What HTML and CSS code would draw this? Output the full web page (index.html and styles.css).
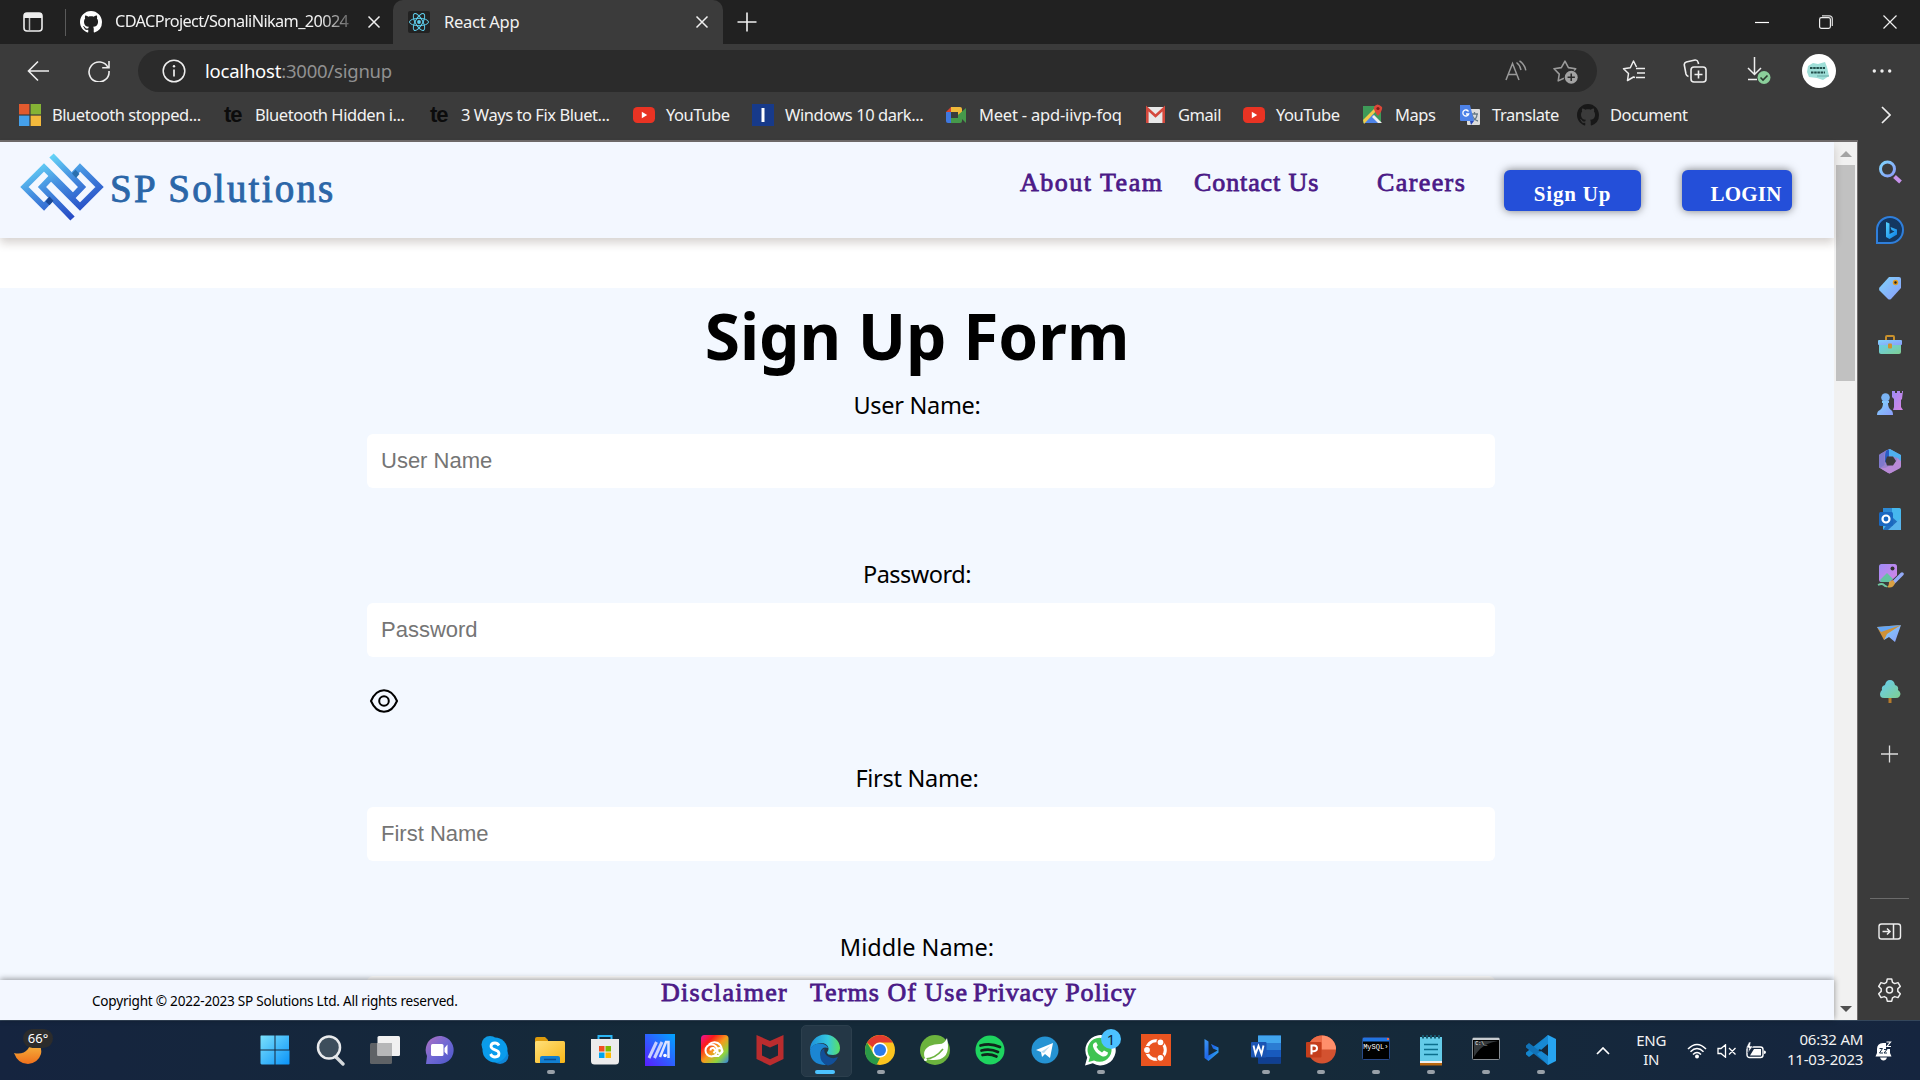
FILE: index.html
```html
<!DOCTYPE html>
<html lang="en">
<head>
<meta charset="utf-8">
<title>React App</title>
<link rel="stylesheet" href="styles.css">
</head>
<body>
<svg width="0" height="0" class="defs">
  <defs>
    <linearGradient id="logo" gradientUnits="userSpaceOnUse" x1="25" y1="0" x2="55" y2="66"><stop offset="0" stop-color="#6be0fb"/><stop offset=".45" stop-color="#458fe0"/><stop offset="1" stop-color="#2547c4"/></linearGradient>
    <linearGradient id="sky" x1="0" y1="0" x2="1" y2="1"><stop offset="0" stop-color="#7fd4fb"/><stop offset="1" stop-color="#8b9cfa"/></linearGradient>
    <linearGradient id="pink" x1="0" y1="0" x2="1" y2="1"><stop offset="0" stop-color="#9d8cf7"/><stop offset="1" stop-color="#d884e4"/></linearGradient>
    <linearGradient id="mint" x1="0" y1="0" x2="1" y2="1"><stop offset="0" stop-color="#66cdf4"/><stop offset="1" stop-color="#7fcf91"/></linearGradient>
    <linearGradient id="blue" x1="0" y1="0" x2="1" y2="1"><stop offset="0" stop-color="#55d3ff"/><stop offset="1" stop-color="#0a7de8"/></linearGradient>
    <linearGradient id="bing" x1="0" y1="0" x2="1" y2="1"><stop offset="0" stop-color="#3d9bf5"/><stop offset=".5" stop-color="#1f66e8"/><stop offset="1" stop-color="#37c8f0"/></linearGradient>
    <linearGradient id="win" x1="0" y1="0" x2="1" y2="1"><stop offset="0" stop-color="#7be0fc"/><stop offset="1" stop-color="#0a93f8"/></linearGradient>
    <linearGradient id="moon" x1="0" y1="0" x2="0" y2="1"><stop offset="0" stop-color="#f7c244"/><stop offset="1" stop-color="#f0701c"/></linearGradient>
    <linearGradient id="chat" x1="0" y1="0" x2="1" y2="1"><stop offset="0" stop-color="#b070c0"/><stop offset=".5" stop-color="#7068d4"/><stop offset="1" stop-color="#4a56c8"/></linearGradient>
    <linearGradient id="folder" x1="0" y1="0" x2="1" y2="1"><stop offset="0" stop-color="#ffe07a"/><stop offset="1" stop-color="#f9b617"/></linearGradient>
    <linearGradient id="asus" x1="1" y1="0" x2="0" y2="1"><stop offset="0" stop-color="#00a5ff"/><stop offset="1" stop-color="#5a1cff"/></linearGradient>
    <linearGradient id="rainbow" x1="0" y1="0" x2="1" y2="1"><stop offset="0" stop-color="#f0129c"/><stop offset=".25" stop-color="#fa1b1b"/><stop offset=".5" stop-color="#f79a1c"/><stop offset=".75" stop-color="#8fd43c"/><stop offset="1" stop-color="#2f7fe8"/></linearGradient>
    <linearGradient id="edge" x1="0" y1="0" x2="1" y2="0"><stop offset="0" stop-color="#1c8fdc"/><stop offset=".6" stop-color="#35c7dd"/><stop offset="1" stop-color="#5be060"/></linearGradient>
    <symbol id="octocat" viewBox="0 0 16 16"><path d="M8 0C3.58 0 0 3.58 0 8c0 3.54 2.29 6.53 5.47 7.59.4.07.55-.17.55-.38 0-.19-.01-.82-.01-1.49-2.01.37-2.53-.49-2.69-.94-.09-.23-.48-.94-.82-1.13-.28-.15-.68-.52-.01-.53.63-.01 1.08.58 1.23.82.72 1.21 1.87.87 2.33.66.07-.52.28-.87.51-1.07-1.78-.2-3.64-.89-3.64-3.95 0-.87.31-1.59.82-2.15-.08-.2-.36-1.02.08-2.12 0 0 .67-.21 2.2.82.64-.18 1.32-.27 2-.27s1.36.09 2 .27c1.53-1.04 2.2-.82 2.2-.82.44 1.1.16 1.92.08 2.12.51.56.82 1.27.82 2.15 0 3.07-1.87 3.75-3.65 3.95.29.25.54.73.54 1.48 0 1.07-.01 1.93-.01 2.2 0 .21.15.46.55.38A8.01 8.01 0 0 0 16 8c0-4.42-3.58-8-8-8z"/></symbol>
    <symbol id="youtube" viewBox="0 0 22 22"><rect y="3" width="22" height="16" rx="4.5" fill="#e93323"/><path d="M8.8 7.8v6.4l5.4-3.2z" fill="#fff"/></symbol>
    <symbol id="x" viewBox="0 0 14 14"><path d="M1.5 1.5l11 11M12.500 1.500l-11 11" stroke="#f0f0f0" stroke-width="1.5" fill="none"/></symbol>
  </defs>
</svg>

<div class="tabstrip">
  <svg class="tab-actions" viewBox="0 0 20 20"><rect x="1" y="1" width="18" height="18" rx="3" fill="none" stroke="#eee" stroke-width="1.6"/><path d="M1 3q0-2 2-2h14q2 0 2 2v3H1z" fill="#eee"/><path d="M6.500 6v13" stroke="#bbb" stroke-width="1.500"/></svg>
  <span class="tab-divider"></span>
  <div class="tab">
    <svg class="favicon" fill="#fff"><use href="#octocat"/></svg>
    <span class="tab-title faded">CDACProject/SonaliNikam_20024</span>
    <svg class="close"><use href="#x"/></svg>
  </div>
  <div class="tab active">
    <svg class="favicon" viewBox="0 0 22 22"><rect width="22" height="22" rx="2" fill="#222"/><g fill="none" stroke="#5fd0ee" stroke-width="1"><ellipse cx="11" cy="11" rx="9.500" ry="3.700"/><ellipse cx="11" cy="11" rx="9.500" ry="3.700" transform="rotate(60 11 11)"/><ellipse cx="11" cy="11" rx="9.500" ry="3.700" transform="rotate(120 11 11)"/></g><circle cx="11" cy="11" r="1.900" fill="#5fd0ee"/></svg>
    <span class="tab-title">React App</span>
    <svg class="close"><use href="#x"/></svg>
  </div>
  <svg class="new-tab" viewBox="0 0 20 20"><path d="M10 .5v19M.5 10h19" stroke="#f0f0f0" stroke-width="1.600"/></svg>
  <div class="window-controls">
    <svg viewBox="0 0 14 14"><path d="M0 7.500h14" stroke="#fff" stroke-width="1.200"/></svg>
    <svg viewBox="0 0 14 14"><rect x=".6" y="2.600" width="10.800" height="10.800" rx="1.800" fill="none" stroke="#eee" stroke-width="1.200"/><path d="M3 .8h7.500a2.800 2.800 0 0 1 2.800 2.800V11" fill="none" stroke="#ddd" stroke-width="1.200"/></svg>
    <svg viewBox="0 0 14 14"><path d="M.5.5l13 13M13.500.5l-13 13" stroke="#f0f0f0" stroke-width="1.200"/></svg>
  </div>
</div>

<div class="toolbar">
  <svg class="back" viewBox="0 0 22 22"><path d="M22 11H1.500M11 1.500L1.500 11l9.500 9.500" fill="none" stroke="#eee" stroke-width="1.600"/></svg>
  <svg class="reload" viewBox="0 0 22 22"><path d="M20 7.500A10 10 0 1 0 21 11M21 1v6.800h-6.800" fill="none" stroke="#eee" stroke-width="1.600"/></svg>
  <div class="address">
    <svg class="info" viewBox="0 0 24 24"><circle cx="12" cy="12" r="10.800" fill="none" stroke="#eee" stroke-width="1.500"/><path d="M12 10.500v7" stroke="#eee" stroke-width="1.700"/><circle cx="12" cy="7.300" r="1.200" fill="#eee"/></svg>
    <span class="url">localhost<span class="dim">:3000/signup</span></span>
    <svg class="read" viewBox="0 0 22 22"><path d="M1 20L7.500 3.500 14 20M3.300 14.500h8.500M11.500 2.500q3.500 2.500 4.500 7.500M14.500.8q5 3.200 6.300 9.500" fill="none" stroke="#9a9a9a" stroke-width="1.500"/></svg>
    <svg class="star" viewBox="0 0 24 24"><path d="M10.500 18.500L5 21l1-6.500L1 9.300l7-1L11.500 2l3.300 6.300 7 1-1.500 1.700" fill="none" stroke="#9a9a9a" stroke-width="1.500" stroke-linejoin="round"/><circle cx="17.500" cy="17.500" r="6.200" fill="#a3a3a3"/><path d="M17.500 14v7M14 17.500h7" stroke="#2b2b2b" stroke-width="1.500"/></svg>
  </div>
  <svg class="t-fav" viewBox="0 0 24 24"><path d="M13 18.500L11.500 18 5.500 21.500l1-7L1.500 9.800l6.800-1L11.500 2l3 6M14 9.500h9M15 14h8M14 18.500h9" fill="none" stroke="#eee" stroke-width="1.500" stroke-linejoin="round"/></svg>
  <svg class="t-coll" viewBox="0 0 24 24"><rect x="8" y="8" width="15" height="15" rx="3" fill="none" stroke="#eee" stroke-width="1.600"/><path d="M15.500 11.500v8M11.500 15.500h8M5.500 17.500q-2-.5-2.500-2.500L1.300 6q-.3-2.300 2-3L12 1q2.400-.2 3 2l.6 2" fill="none" stroke="#eee" stroke-width="1.600"/></svg>
  <svg class="t-down" viewBox="0 0 24 28"><path d="M7.500 0v17M1 11l6.500 6.500L14 11M1 22.500h9" fill="none" stroke="#eee" stroke-width="1.500"/><circle cx="17" cy="20.500" r="6.500" fill="#8bcf9b"/><path d="M13.500 20.500l2.500 2.500 4.500-4.500" fill="none" stroke="#2b3b30" stroke-width="1.600"/></svg>
  <svg class="t-avatar" viewBox="0 0 34 34"><circle cx="17" cy="17" r="17" fill="#fff"/><path d="M6 12l5-3 5 1 7-2 2 5 2 9-6 4-6-2-8-1-2-5z" fill="#9fdfd8"/><path d="M8 14h15M9 18.500h14" stroke="#234f4c" stroke-width="2.200" stroke-dasharray="2.500 .7"/><path d="M15 22h12" stroke="#69aaa5"/></svg>
  <svg class="t-dots" viewBox="0 0 20 6"><circle cx="2.300" cy="3" r="1.700" fill="#eee"/><circle cx="10" cy="3" r="1.700" fill="#eee"/><circle cx="17.700" cy="3" r="1.700" fill="#eee"/></svg>
</div>

<div class="bookmarks">
  <a><svg viewBox="0 0 22 22"><path d="M0 0h10.400v10.400H0z" fill="#e25a2e"/><path d="M11.600 0H22v10.400H11.600z" fill="#85b335"/><path d="M0 11.600h10.400V22H0z" fill="#45a0ea"/><path d="M11.600 11.600H22V22H11.600z" fill="#f3b93c"/></svg>Bluetooth stopped...</a>
  <a><span class="te">te</span>Bluetooth Hidden i...</a>
  <a><span class="te">te</span>3 Ways to Fix Bluet...</a>
  <a><svg><use href="#youtube"/></svg>YouTube</a>
  <a><svg viewBox="0 0 22 22"><path d="M0 0h22v22H0z" fill="#173a8a"/><path d="M11 4v14" stroke="#fff" stroke-width="3"/></svg>Windows 10 dark...</a>
  <a class="wide"><svg viewBox="0 0 22 22"><path d="M0 8h5v11H2q-2 0-2-2z" fill="#3f78e0"/><path d="M5 3v5H0z" fill="#d9432f"/><path d="M5 3h9q2 0 2 2v5l-4 1V8H5z" fill="#f0b93a"/><path d="M5 14h7v-3l8-7v15l-4-4v2q0 2-2 2H5z" fill="#46994b"/></svg>Meet - apd-iivp-foq</a>
  <a><svg viewBox="0 0 22 22"><path d="M1 3h19v16H1z" fill="#e8e8e8"/><path d="M2.300 19V4.500L10.500 12l8.200-7.500V19" fill="none" stroke="#d4483c" stroke-width="2.600"/></svg>Gmail</a>
  <a><svg><use href="#youtube"/></svg>YouTube</a>
  <a><svg viewBox="0 0 22 22"><path d="M1 2h18v17H1z" fill="#3e9a58"/><path d="M2 19l9-9 8 9z" fill="#4d83e8"/><path d="M1 16L14 3l2 2L2 20z" fill="#f2ca4c"/><path d="M12 11l8 8h-4l-6-6z" fill="#eee"/><path d="M16 12q-5-6-4-9 3-5 8 0 1 3-4 9z" fill="#dc4738"/><circle cx="16" cy="4.500" r="1.600" fill="#7d1d18"/></svg>Maps</a>
  <a><svg viewBox="0 0 22 22"><rect x="8" y="5" width="13" height="16" rx="1" fill="#dcdcdc"/><path d="M12 10h7M15.500 8v2M13 17q5-2 5-7M13 11q2 5 6 6" stroke="#687b86" stroke-width="1.300" fill="none"/><path d="M1 1h10l4 16H2q-1 0-1-1z" fill="#4d82e8"/><path d="M11 17h4l-3 4z" fill="#2746b8"/><path d="M9.500 7.500A3 3 0 1 0 9.700 10H7" fill="none" stroke="#fff" stroke-width="1.300"/></svg>Translate</a>
  <a><svg fill="#181818"><use href="#octocat"/></svg>Document</a>
  <svg class="more" viewBox="0 0 10 18"><path d="M1 1l8 8-8 8" fill="none" stroke="#eee" stroke-width="1.700"/></svg>
</div>

<div class="main">
  <div class="page">
    <header class="site-header">
      <svg class="logo" viewBox="0 0 84 68"><g fill="none" stroke="url(#logo)" stroke-width="6"><path d="M30.500 46.500L24 53.500 4.500 34 24 14.500 54 44.500"/><path d="M53.500 21.500L60 14.500 79.500 34 60 53.500 30 23.500"/><path d="M31.500 2.500L62 34 53 43.500"/><path d="M52.500 65.500L22 34l9-9.500"/></g><path d="M52 20.500l3.500-3.700 4 4.200-3.500 4z" fill="#2a6fae"/><path d="M25.500 48.500l4-5 4 4.200-4 4.600z" fill="#1d4a96"/></svg>
      <span class="brand">SP Solutions</span>
      <nav class="site-nav">
        <a class="n1">About Team</a><a class="n2">Contact Us</a><a class="n3">Careers</a>
        <button class="signup">Sign Up</button><button class="login">LOGIN</button>
      </nav>
    </header>
    <main class="content">
      <form class="form">
        <h1>Sign Up Form</h1>
        <div class="field"><label>User Name:</label><input placeholder="User Name"></div>
        <div class="field"><label class="tight">Password:</label><input placeholder="Password">
          <svg class="eye" viewBox="0 0 28 24"><path d="M1 12C4 5 9 1.200 14 1.200S24 5 27 12C24 19 19 22.800 14 22.800S4 19 1 12z" fill="none" stroke="#000" stroke-width="2"/><circle cx="14" cy="12" r="4.800" fill="none" stroke="#000" stroke-width="2"/></svg>
        </div>
        <div class="field"><label>First Name:</label><input placeholder="First Name"></div>
        <div class="field"><label class="loose">Middle Name:</label><input></div>
      </form>
    </main>
    <footer class="site-footer">
      <span class="copyright">Copyright © 2022-2023 SP Solutions Ltd. All rights reserved.</span>
      <a class="f1">Disclaimer</a><a class="f2">Terms Of Use</a><a class="f3">Privacy Policy</a>
    </footer>
  </div>
  <div class="scrollbar">
    <svg viewBox="0 0 12 6"><path d="M0 6l6-6 6 6z" fill="#a3a3a3"/></svg>
    <span class="thumb"></span>
    <svg viewBox="0 0 12 6"><path d="M0 0l6 6 6-6z" fill="#505050"/></svg>
  </div>
  <aside class="sidebar">
    <svg viewBox="0 0 28 28"><circle cx="11.500" cy="11" r="7" fill="none" stroke="url(#sky)" stroke-width="3"/><path d="M18.500 18.500l6 5.500" stroke="#c792ec" stroke-width="4"/></svg>
    <svg viewBox="0 0 28 28"><path d="M1 27V14A13 13 0 1 1 14 27z" fill="#143760" stroke="#2f7fdc" stroke-width="2"/><path d="M10 6l3.500 1.500V18l5-2.500-3-1.500-1-3 6.500 2.500v5L13.500 23 10 21z" fill="url(#blue)"/></svg>
    <svg viewBox="0 0 28 28"><path d="M13 3h10q2 0 2 2v9L15 25q-1.500 1-3 0l-8.500-8.500q-1-1.500 0-3z" fill="url(#sky)"/><circle cx="19.500" cy="8.500" r="2" fill="#222" stroke="#e09a22" stroke-width="1.500"/></svg>
    <svg viewBox="0 0 28 28"><path d="M10 9V6q0-1 1-1h6q1 0 1 1v3" fill="none" stroke="#c8902c" stroke-width="2"/><path d="M3 12h22v9q0 2-2 2H5q-2 0-2-2z" fill="url(#mint)"/><rect x="2" y="9" width="24" height="5" rx="1" fill="url(#sky)"/><rect x="12" y="12.500" width="4" height="5" rx="1" fill="#cf952f"/></svg>
    <svg viewBox="0 0 28 28"><path d="M16 2h3v2h2V2h3v2h2V2h1l-1 8-1 1v7l2 3H17l1-3v-8l-2-2z" fill="url(#pink)"/><circle cx="9.500" cy="8.500" r="4.300" fill="#7bb4f5"/><path d="M6 12h7v2h-1q0 5 3 7 2 1 2 5H1q0-4 3-5 3-2 3-7H6z" fill="url(#sky)"/></svg>
    <svg viewBox="0 0 28 28"><path d="M10 3.500L13.500 2l11 6v12l-11 6.500L3 20.500V8z" fill="#9b83cc"/><path d="M10.500 3.500L14 2l11 6v8l-3-5-8-2H9z" fill="#4fb0f0"/><path d="M10.500 3.500Q8 5 8.500 11v7L4 21q-1-.5-1-2V9q0-1.500 1.500-2.300z" fill="#7f79cc"/><path d="M10.500 3.500Q9 5 9 11v5l4-5V2.500z" fill="#2a5cc4"/><path d="M25 14v5q0 1.500-1.500 2.500L15 26q-1.500.8-3 0l-8-5q5 1 9-2l5-3q4-2 3-5z" fill="#b98ad6"/><path d="M11 9.500h6l3 4.500-3 4.500h-6L9.500 14z" fill="#3b3b3b"/></svg>
    <svg viewBox="0 0 28 28"><rect x="7" y="3" width="18" height="22" rx="1.500" fill="#46b8ee"/><path d="M7 3h9v8H7z" fill="#2d8ad4"/><path d="M16 12l9 8v5H7z" fill="#236fbe"/><path d="M25 13v12H12z" fill="#59b4ec"/><rect x="3" y="7" width="14" height="14" rx="1.500" fill="#1a68c0"/><circle cx="10" cy="14" r="3.500" fill="none" stroke="#fff" stroke-width="2.200"/></svg>
    <svg viewBox="0 0 28 28"><rect x="3" y="2" width="18" height="18" rx="2.500" fill="url(#pink)"/><path d="M4 18l7-7 6 6-4 3H5z" fill="#63c3a2"/><circle cx="16.500" cy="6.500" r="2" fill="#333"/><path d="M26.500 12L17 21" stroke="#3b3b3b" stroke-width="5.500"/><path d="M26 12L17 21" stroke="#93aaf7" stroke-width="3.500" stroke-linecap="round"/><path d="M13 20l4-2 2 3q-2 6-8 4 2-1 2-5z" fill="#d8a043"/><path d="M2 23q4-2 6 0t3 1" fill="none" stroke="#70c7a1" stroke-width="1.800"/></svg>
    <svg viewBox="0 0 28 28"><path d="M1 7l24-2L8 20z" fill="#cf9238"/><path d="M1 7l24-2L5 12z" fill="#65a6f5"/><path d="M25 5l-6 17-6-5-5 3 3-6z" fill="url(#sky)"/></svg>
    <svg viewBox="0 0 28 28"><path d="M12.500 19h3v6h-3z" fill="#b67a2b"/><path d="M14 2q4 0 5 5 4 1 3 5 4 3 1.500 6.500-1 1.500-4 1.500h-11q-3 0-4-1.500Q3 15 6 12q-1-4 3-5 1-5 5-5z" fill="url(#mint)"/></svg>
    <svg class="add" viewBox="0 0 28 28"><path d="M13.500 5.500v17M5 14h17" stroke="#ddd" stroke-width="1.300"/></svg>
    <hr>
    <svg viewBox="0 0 28 28"><rect x="3" y="6" width="21.500" height="15" rx="2.500" fill="none" stroke="#eee" stroke-width="1.400"/><path d="M17.500 6v15M6.500 13.500H14M11 10.500l3 3-3 3" fill="none" stroke="#eee" stroke-width="1.500"/></svg>
    <svg viewBox="0 0 28 28"><path d="M11.300 3h4.400l.8 3.400 2.200 1.200 3.300-1 2.300 3.800-2.500 2.400v2.600l2.500 2.400-2.300 3.800-3.300-1-2.200 1.200-.8 3.400h-4.400l-.8-3.400-2.200-1.200-3.300 1-2.300-3.800 2.500-2.400v-2.600L2.700 10.400 5 6.600l3.300 1 2.200-1.200z" fill="none" stroke="#eee" stroke-width="1.500" stroke-linejoin="round"/><circle cx="13.500" cy="14.100" r="3" fill="none" stroke="#eee" stroke-width="1.500"/></svg>
  </aside>
</div>

<div class="taskbar">
  <div class="weather">
    <svg viewBox="0 0 28 26"><path d="M0 14q9 2 14-4 3-4 3-9 12 4 10 14-3 9-13 10Q4 25 0 14z" fill="url(#moon)"/></svg>
    <span>66°</span>
  </div>
  <div class="apps">
    <i><svg viewBox="0 0 32 32"><path d="M2 1.500h13.500v14H1.500V2zM16.500 1.500H30v14H16.500zM1.500 16.500h14v14h-13l-1-1zM16.500 16.500H30.500V30l-.5.500H16.500z" fill="url(#win)"/></svg></i>
    <i><svg viewBox="0 0 32 32"><path d="M22 23l7 7" stroke="#d5d9dc" stroke-width="3.300" stroke-linecap="round"/><circle cx="15" cy="13.500" r="11" fill="#3d4e5c" stroke="#e8eaec" stroke-width="2.500"/></svg></i>
    <i><svg viewBox="0 0 32 32"><rect x="1" y="9" width="22" height="21" rx="1.500" fill="#5e6266"/><rect x="8.500" y="2" width="22.500" height="20" rx="1.500" fill="#f1f1f1"/><path d="M8.500 9H23v13H8.500z" fill="#b6b7b8"/></svg></i>
    <i><svg viewBox="0 0 32 32"><path d="M2 30l1-8A14 14 0 1 1 16 30z" fill="url(#chat)"/><rect x="7" y="10" width="12.500" height="12" rx="1.500" fill="#fff"/><path d="M20.500 14l3-3.500V21l-3-3z" fill="#fff"/></svg></i>
    <i><svg viewBox="0 0 32 32"><circle cx="11" cy="10.500" r="8.500" fill="#0f9be4"/><circle cx="21" cy="21.500" r="8.500" fill="#0f86d8"/><circle cx="16" cy="16" r="12.500" fill="#0a9cec"/><path d="M20 11.500q-1.500-2.500-4-2.500-4 0-4 3.300 0 2.200 4 3.500t4 3.700q0 3.500-4 3.500-3 0-4.500-3" fill="none" stroke="#fff" stroke-width="2.800"/></svg></i>
    <i class="run"><svg viewBox="0 0 32 32"><path d="M1 5q0-2 2-2h8l3 3v4H1z" fill="#dc9a0c"/><rect x="1" y="7" width="30" height="22" rx="1.500" fill="url(#folder)"/><path d="M6 29v-5q0-2 2-2h16q2 0 2 2v5z" fill="#1280d2"/><path d="M10 25.500h12" stroke="#0b4e92" stroke-width="1.500"/></svg></i>
    <i><svg viewBox="0 0 32 32"><path d="M9.500 6V2h13v4" fill="none" stroke="#2bb5f3" stroke-width="2"/><path d="M2 5h28v22q0 3.500-3.500 3.500h-21Q2 30.500 2 27z" fill="#ececec"/><path d="M10 12h5.500v5.500H10z" fill="#f25022"/><path d="M16.500 12H22v5.500h-5.500z" fill="#7fba00"/><path d="M10 18.500h5.500V24H10z" fill="#00a4ef"/><path d="M16.500 18.500H22V24h-5.500z" fill="#ffb900"/></svg></i>
    <i><svg viewBox="0 0 32 32"><path d="M1 0h30v32H1z" fill="url(#asus)"/><path d="M5 24L12.500 8M10.500 24L18 8" stroke="#c9d0ff" stroke-width="3"/><path d="M16 23L22 8h2.500v16" fill="none" stroke="#dfe4ff" stroke-width="2.500"/><circle cx="21" cy="21.500" r="1.800" fill="#fff"/></svg></i>
    <i><svg viewBox="0 0 32 32"><rect x="2" y="1" width="27.500" height="28" rx="3.500" fill="url(#rainbow)"/><g fill="none" stroke="#fff" stroke-width="2"><circle cx="12.500" cy="16.500" r="6"/><path d="M10 10.500a7.500 7.500 0 1 1 9.500 11.500h-6"/><path d="M11.500 16.500q0-3 3-2.500l5 5q3 1.500 4-1.500 0-3-3-3.500-1.500 0-3 1.500l-3 3.500"/></g></svg></i>
    <i><svg viewBox="0 0 32 32"><path d="M2.500 1l13.500 6 13.500-6v24L16 31.500 2.500 25zM8 10v11.500l8 3.800 8-3.800V10l-8 3.500z" fill="#b92c2e" fill-rule="evenodd"/></svg></i>
    <i class="current"><svg viewBox="0 0 32 32"><path d="M1 16C1 7 8 .5 16 .5S31 6.500 31 14q0 7-7 7-6 0-6-2.500 2-2 1.500-4.500Q18 9 12 9 4 9.500 1 16z" fill="url(#edge)"/><path d="M1 16q2-6.500 10-6.500 6 0 8 4.500-6-2-7.500 4-1 7 5.500 13Q1 31 1 16z" fill="#1b86d3"/><path d="M19 31.500q-9-3-7.500-12 .5-4 4-5-1 5 3.500 8t10 .5q-3 7-10 8.500z" fill="#124f98"/></svg></i>
    <i class="run"><svg viewBox="0 0 32 32"><circle cx="16" cy="16" r="15" fill="#fbc41f"/><path d="M3 8.500Q8 1 16 1t13 7.500H16a7.500 7.500 0 0 0-7 5z" fill="#e33b2e"/><path d="M3 8.500l7 12q2 3.500 6 3.500l-3.500 7Q1 28 1 16q0-4 2-7.500z" fill="#2a9a48"/><circle cx="16" cy="16" r="7.600" fill="#fff"/><circle cx="16" cy="16" r="6" fill="#2b7bea"/></svg></i>
    <i><svg viewBox="0 0 32 32"><circle cx="16" cy="16" r="15" fill="#6cb33e"/><path d="M28 4q5 23-15 22-6 0-7.500-3-2-7 5-11 5-2 10-2 5 0 7.500-6z" fill="#fff"/><path d="M6 25q10 0 18-10" fill="none" stroke="#6cb33e" stroke-width="1.600"/><circle cx="6.500" cy="25.500" r="1.500" fill="#fff"/></svg></i>
    <i><svg viewBox="0 0 32 32"><circle cx="16" cy="16" r="14.500" fill="#1ed45f"/><path d="M6.500 11.500q10-3 19.500 1.500M7.500 16.500q8.500-2.500 16.500 1.500M8.500 21q7-2 14 1.500" fill="none" stroke="#10261c" stroke-width="2.700" stroke-linecap="round"/></svg></i>
    <i><svg viewBox="0 0 32 32"><circle cx="16" cy="16" r="13.500" fill="#2593d3"/><path d="M7 16l17-7-3 15-5-4-3 3-1-5z" fill="#fff"/><path d="M12 18l9-6-6 7z" fill="#b4d9ef"/></svg></i>
    <i class="run"><svg viewBox="0 0 32 32"><path d="M1 31.500l2.200-8A15.200 15.200 0 1 1 8.800 29.300z" fill="#fff"/><path d="M4.500 28l1.400-5A12 12 0 1 1 10 26.500z" fill="#3fc352"/><path d="M11 8.500q-2.500 1-2 4 1.500 6 8.500 9.500 4 1.500 6-1.500l.5-2-4-2-2 2q-4-2-5.500-5.500l1.300-1.700-1.600-3z" fill="#fff"/></svg><b class="badge">1</b></i>
    <i><svg viewBox="0 0 32 32"><path d="M1 0h30v32H1z" fill="#e95420"/><circle cx="16" cy="16" r="9.300" fill="none" stroke="#fff" stroke-width="3"/><g fill="#fff" stroke="#e95420" stroke-width="1.200"><circle cx="7" cy="16" r="3.500"/><circle cx="20.500" cy="8.300" r="3.500"/><circle cx="20.500" cy="23.800" r="3.500"/></g></svg></i>
    <i><svg viewBox="0 0 32 32"><path d="M9.500 5l4 2.500v14l9-5-4.500-2-2-4.500 7.500 3.500v5L13.500 27l-4-3z" fill="url(#bing)"/></svg></i>
    <i class="run"><svg viewBox="0 0 32 32"><rect x="8" y="1.500" width="23" height="28" rx="1" fill="#185abd"/><path d="M8 1.500h23v8H8z" fill="#41a5ee"/><path d="M8 9h23v7H8z" fill="#2b7cd3"/><path d="M8 23h23v6.500H8z" fill="#103f91"/><rect x="1" y="8" width="15.500" height="15.500" rx="1" fill="#1b55b4"/><path d="M3.500 11.500l2 8.500 3-8 3 8 2-8.500" fill="none" stroke="#fff" stroke-width="1.900"/></svg></i>
    <i class="run"><svg viewBox="0 0 32 32"><circle cx="17" cy="15.500" r="14" fill="#d35230"/><path d="M17 1.500a14 14 0 0 1 14 14H17z" fill="#ff8f6b"/><path d="M17 1.500v14H3a14 14 0 0 1 14-14z" fill="#ed6c47"/><rect x="1" y="8" width="15.500" height="15.500" rx="1" fill="#c43e1c"/><path d="M6.500 20.500v-9H9q3 0 3 2.800t-3 2.900H6.500" fill="none" stroke="#fff" stroke-width="2"/></svg></i>
    <i class="run"><svg viewBox="0 0 32 32"><rect x="2.500" y="3.500" width="27" height="22" rx="1" fill="#000" stroke="#28498a"/><path d="M3 4h26v3.500H3z" fill="#2174e0"/><path d="M27 4h2v2h-2z" fill="#e66a4b"/></svg><em>MySQL›</em></i>
    <i class="run"><svg viewBox="0 0 32 32"><path d="M5 28h22v3.500H5z" fill="#b9670e"/><path d="M5 27h22v2H5z" fill="#eee"/><path d="M5 3h22v24H5z" fill="#63cbe8"/><path d="M9 10.500h14M9 15.500h14M9 20.500h14" stroke="#0b6e8c" stroke-width="1.700"/><path d="M8 1v3.500M12 1v3.500M16 1v3.500M20 1v3.500M24 1v3.500" stroke="#17586d" stroke-width="2"/></svg></i>
    <i class="run"><svg viewBox="0 0 32 32"><rect x="2.500" y="4" width="27" height="21.500" rx="1" fill="#000" stroke="#888e94"/><path d="M3 4h26v2H3z" fill="#c7ccd0"/><path d="M4 7h24q-12 2-18 8-3 3-6 8z" fill="#34383b"/></svg><em class="cmd">C:\_</em></i>
    <i class="run"><svg viewBox="0 0 32 32"><path d="M23 1l8 4v22l-8 4z" fill="#27a4f0"/><path d="M23 1v8L4 23l-3-2.500v-2z" fill="#1486ce"/><path d="M1 11.500L4 9l19 14.500V31L1 13.500z" fill="#1173b8"/><path d="M23 1L12 12l4 4 7-6zM23 31L12 20l4-3 7 5z" fill="#1889d4"/></svg></i>
  </div>
  <div class="tray">
    <svg class="up" viewBox="0 0 14 8"><path d="M1 7l6-6 6 6" fill="none" stroke="#fff" stroke-width="1.700"/></svg>
    <span class="lang">ENG<br>IN</span>
    <svg class="wifi" viewBox="0 0 20 16"><g fill="none" stroke="#fff" stroke-width="1.500"><path d="M1 6q9-9 18 0"/><path d="M3.500 8.800q6.500-6.500 13 0"/><path d="M6 11.500q4-4 8 0"/></g><circle cx="10" cy="13.500" r="2" fill="#fff"/></svg>
    <svg class="mute" viewBox="0 0 20 14"><path d="M1 4.500h3L8.500.8v12.400L4 9.500H1zM12 4l6.500 6.500M18.500 4L12 10.500" fill="none" stroke="#fff" stroke-width="1.300"/></svg>
    <svg class="battery" viewBox="0 0 20 18"><rect x="1" y="5" width="16" height="10.500" rx="2.500" fill="none" stroke="#fff" stroke-width="1.400"/><path d="M4 13.500l4-6.500h7v6.500zM18 8.500q2 0 2 1.800t-2 1.800z" fill="#fff"/><path d="M3 0L0 6h3l-1 5 5-7H4l1-4z" fill="#fff" stroke="#15273f" stroke-width=".6"/></svg>
    <span class="clock">06:32 AM<br>11-03-2023</span>
    <svg class="bell" viewBox="0 0 18 20"><path d="M2 12V8q0-5.500 6-6h3v6h4v4l1.500 3.500H.5zM5 16.500h7q-1 3-3.500 3T5 16.500z" fill="#fff"/><path d="M11.500 1h4L12 5.500h4" fill="none" stroke="#fff" stroke-width="1.200"/><path d="M4.500 7.500h3L4.500 12H8M9 8.500h3l-3 3.500h3" fill="none" stroke="#1b3048" stroke-width="1"/></svg>
  </div>
</div>
</body>
</html>
```
FILE: styles.css
```css
* { box-sizing: border-box; }
body {
  margin: 0;
  width: 1920px;
  height: 1080px;
  overflow: hidden;
  display: flex;
  flex-direction: column;
  background: #3b3b3b;
  font-family: "Noto Sans", sans-serif;
  color: #f2f2f2;
}
svg { display: block; flex: none; }
.defs { position: absolute; }
a { white-space: nowrap; }

/* Browser tabs */
.tabstrip { height: 44px; background: #212121; display: flex; align-items: center; flex: none; }
.tab-actions { width: 20px; height: 20px; margin-left: 23px; }
.tab-divider { width: 1px; height: 27px; background: #5a5a5a; margin: 0 14px 0 22px; }
.tab { width: 313px; height: 44px; display: flex; align-items: center; font-size: 16.5px; }
.tab.active { width: 330px; padding-left: 15px; background: #3b3b3b; border-radius: 10px 10px 0 0; }
.favicon { width: 22px; height: 22px; margin-right: 14px; }
.tab-title { width: 251px; padding-bottom: 2px; white-space: nowrap; letter-spacing: -.28px; }
.tab-title.faded { width: 241px; margin: 0 11px 0 -1px; font-size: 16.3px; letter-spacing: -.62px; -webkit-mask-image: linear-gradient(90deg, #000 85%, rgba(0, 0, 0, .15)); mask-image: linear-gradient(90deg, #000 85%, rgba(0, 0, 0, .15)); }
.close { width: 14px; height: 14px; }
.new-tab { width: 20px; height: 20px; margin-left: 14px; }
.window-controls { margin-left: auto; display: flex; gap: 50px; padding-right: 23px; }
.window-controls svg { width: 14px; height: 14px; }

/* Navigation toolbar */
.toolbar { height: 54px; display: flex; align-items: center; flex: none; }
.back { width: 22px; height: 22px; margin-left: 27px; }
.reload { width: 22px; height: 22px; margin-left: 39px; }
.address { width: 1459px; height: 42px; margin-left: 28px; border-radius: 21px; background: #2b2b2b; display: flex; align-items: center; }
.info { width: 24px; height: 24px; margin-left: 24px; }
.url { margin-left: 19px; padding-bottom: 2px; font-size: 18.5px; letter-spacing: -.22px; color: #fff; }
.url .dim { color: #919191; }
.read { width: 22px; height: 22px; margin-left: auto; }
.star { width: 25px; height: 25px; margin: 0 19px 0 26px; }
.t-fav { width: 24px; height: 24px; margin-left: 25px; }
.t-coll { width: 24px; height: 24px; margin-left: 37px; }
.t-down { width: 24px; height: 28px; margin-left: 40px; }
.t-avatar { width: 34px; height: 34px; margin-left: 31px; }
.t-dots { width: 20px; height: 6px; margin-left: 36px; }

/* Favourites bar */
.bookmarks {
  height: 42px;
  flex: none;
  padding: 0 0 9px 19px;
  display: grid;
  grid-template-columns: 205px 206px 203px 119px 194px 199px 98px 119px 97px 118px 304px 10px;
  align-items: center;
  font-size: 16.5px;
}
.bookmarks a { display: flex; align-items: center; gap: 11px; letter-spacing: -.45px; }
.bookmarks a.wide { letter-spacing: -.2px; }
.bookmarks a svg { width: 22px; height: 22px; }
.te { width: 20px; font: bold 22px/22px "Liberation Sans", sans-serif; color: #0c0c0c; letter-spacing: -1px; }
.more { width: 10px; height: 18px; }

/* Web page */
.main { height: 880px; flex: none; display: flex; }
.page { width: 1834px; border-top: 2px solid #6f6b6b; background: #fff; display: flex; flex-direction: column; color: #000; }
.site-header { height: 96px; flex: none; position: relative; z-index: 1; background: #f3f7ff; box-shadow: 0 5px 9px rgba(50, 30, 20, .2); display: flex; align-items: flex-start; }
.logo { width: 84px; height: 68px; margin: 11px 0 0 20px; }
.brand { margin: 22px 0 0 6px; font: 39px/50px "Liberation Serif", serif; color: #2b66a8; -webkit-text-stroke: .9px #2b66a8; letter-spacing: 2.2px; white-space: nowrap; width: 910px; }
.site-nav { display: flex; font: 26px/36px "Liberation Serif", serif; }
.site-nav a, .site-footer a { color: #4b1a87; -webkit-text-stroke: .8px #4b1a87; letter-spacing: .9px; }
.site-nav a { margin-top: 23px; }
.site-nav .n1 { width: 174px; letter-spacing: 1.5px; }
.n2 { width: 183px; }
.site-nav .n3 { width: 127px; letter-spacing: 1.4px; }
.site-nav button { height: 41px; margin-top: 28px; padding: 7px 0 0; border: 0; border-radius: 6px; background: #244fd9; color: #fff; font: bold 21px/34px "Liberation Serif", serif; box-shadow: 0 0 8px rgba(0, 0, 0, .5); }
.site-nav .signup { width: 137px; letter-spacing: .8px; }
.site-nav .login { width: 110px; margin-left: 41px; padding-left: 18px; letter-spacing: .2px; }
.content { flex: 1; min-height: 0; overflow: hidden; padding-top: 50px; }
.form { background: #f3f8ff; }
.form h1 { height: 92px; margin: 0; text-align: center; font-size: 64px; line-height: 95px; }
.field { padding: 0 339px 61px 367px; }
.field label { display: block; height: 54px; line-height: 50px; text-align: center; margin-left: -28px; font-size: 23.5px; letter-spacing: -.3px; }
.field label.tight { letter-spacing: -.5px; }
.field label.loose { letter-spacing: 0; }
.field input { display: block; width: 100%; height: 54px; border: 0; border-radius: 6px; padding: 0 14px 1px; background: #fff; font: 22px "Liberation Sans", sans-serif; }
.field input::placeholder { color: #757575; }
.eye { width: 30px; height: 24px; margin: 32px 0 -21px 2px; }
.site-footer { height: 40px; flex: none; position: relative; z-index: 1; background: #f3f7ff; box-shadow: 0 -1px 6px rgba(0, 0, 0, .4); display: flex; padding-left: 92px; font: 26px/26px "Liberation Serif", serif; }
.copyright { width: 569px; font: 13.6px/42px "Noto Sans", sans-serif; letter-spacing: -.24px; white-space: nowrap; }
.site-footer .f1 { width: 149px; letter-spacing: 1.3px; }
.site-footer .f2 { width: 163px; letter-spacing: 1.05px; }
.site-footer .f3 { letter-spacing: .8px; }

/* Scrollbar */
.scrollbar { width: 24px; border-top: 2px solid #6f6b6b; border-right: 1px solid #6f6b6b; background: #f1f1f1; display: flex; flex-direction: column; align-items: center; padding: 9px 0 8px; }
.scrollbar svg { width: 12px; height: 6px; }
.thumb { width: 19px; height: 216px; margin: 8px 0 auto; background: #c1c1c1; }

/* Browser sidebar */
.sidebar { width: 62px; padding-top: 18px; display: flex; flex-direction: column; align-items: center; gap: 29.75px; }
.sidebar svg { width: 28px; height: 28px; margin-left: 1px; }
.sidebar .add { margin-top: 4px; }
.sidebar hr { width: 39px; height: 1px; margin: 101px 0 -11px; border: 0; background: #6b6b6b; }

/* Taskbar */
.taskbar { height: 60px; flex: none; border-top: 1px solid #34465a; display: flex; background: linear-gradient(90deg, #15243f, #152a39 35%, #152a39 68%, #15253f); }
.weather { width: 247.5px; position: relative; padding: 18px 0 0 14px; }
.weather svg { width: 28px; height: 26px; }
.weather span { position: absolute; left: 23px; top: 8px; width: 30px; height: 19px; border-radius: 10px; background: #2c2c2c; color: #fff; font-size: 13px; line-height: 19px; text-align: center; white-space: nowrap; }
.apps { display: grid; grid-template-columns: repeat(24, 55.04px); }
.apps i { position: relative; padding-top: 13px; display: flex; justify-content: center; font-style: normal; }
.apps svg { width: 32px; height: 32px; }
.apps i.current svg { position: relative; }
.run::after { content: ""; position: absolute; left: 24px; bottom: 6px; width: 8px; height: 4px; border-radius: 2px; background: #98a0a8; }
.current::before { content: ""; position: absolute; left: 3px; top: 4px; width: 49px; height: 50px; border-radius: 5px; background: #243746; border: 1px solid #2c3f4d; }
.current::after { content: ""; position: absolute; left: 17px; bottom: 6px; width: 20px; height: 4px; border-radius: 2px; background: #4cc2ff; }
.badge { position: absolute; left: 28px; top: 8px; width: 20px; height: 20px; border-radius: 50%; background: #4cc2ff; color: #10283a; font: 15px/20px "Noto Sans", sans-serif; text-align: center; }
.apps em { position: absolute; left: 15px; top: 21px; font: 7px/10px "Liberation Mono", monospace; color: #fff; }
.apps em.cmd { top: 18px; left: 17px; font-size: 5px; }
.tray { display: flex; align-items: center; font-size: 15px; line-height: 19.5px; }
.up { width: 14px; height: 8px; margin-left: 28px; }
.lang { width: 50px; margin-left: 16px; padding-bottom: 1px; text-align: center; letter-spacing: -.2px; }
.wifi { width: 20px; height: 16px; margin-left: 11px; }
.mute { width: 20px; height: 14px; margin-left: 10px; }
.battery { width: 20px; height: 18px; margin-left: 9px; }
.clock { width: 97px; padding-bottom: 2px; text-align: right; white-space: nowrap; letter-spacing: -.2px; }
.bell { width: 18px; height: 20px; margin-left: 12px; }
```
